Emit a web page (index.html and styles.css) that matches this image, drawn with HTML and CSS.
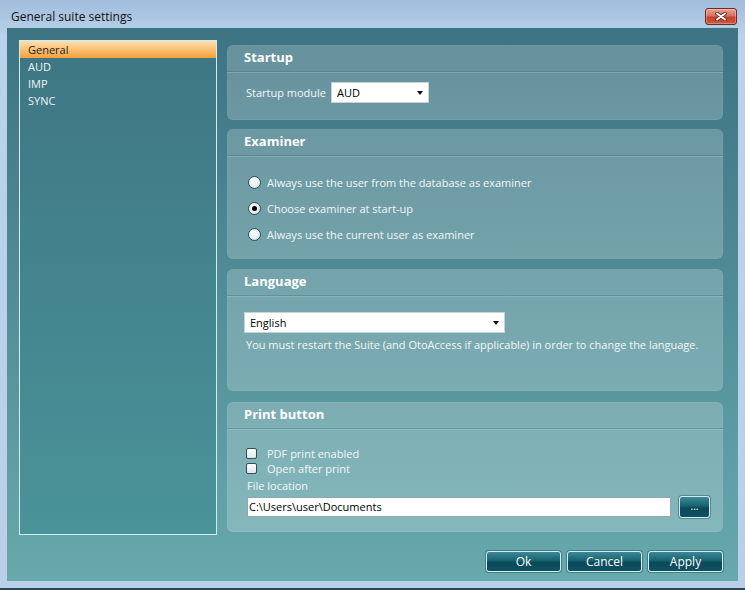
FILE: index.html
```html
<!DOCTYPE html>
<html lang="en">
<head>
<meta charset="utf-8">
<title>General suite settings</title>
<link rel="stylesheet" href="styles.css">
</head>
<body>
<div class="window">
  <div class="titlebar">
    <span class="title">General suite settings</span>
    <div class="close">
      <svg width="12" height="9" viewBox="0 0 12 9"><path d="M2 1.5 L10 7.5 M10 1.5 L2 7.5" stroke="#6a2419" stroke-width="3.6" stroke-linecap="round"/><path d="M2 1.5 L10 7.5 M10 1.5 L2 7.5" stroke="#fff" stroke-width="2" stroke-linecap="round"/></svg>
    </div>
  </div>
  <div class="client">
    <div class="main">
      <ul class="nav">
        <li class="sel">General</li>
        <li>AUD</li>
        <li>IMP</li>
        <li>SYNC</li>
      </ul>
      <div class="groups">
        <section class="group g-startup">
          <div class="ghead">Startup</div>
          <div class="gbody b-startup">
            <span class="label">Startup module</span>
            <div class="select s-small"><span>AUD</span><i class="arrow"></i></div>
          </div>
        </section>
        <section class="group g-examiner">
          <div class="ghead">Examiner</div>
          <div class="gbody b-examiner">
            <div class="opt"><span class="radio"></span><span>Always use the user from the database as examiner</span></div>
            <div class="opt"><span class="radio on"></span><span>Choose examiner at start-up</span></div>
            <div class="opt"><span class="radio"></span><span>Always use the current user as examiner</span></div>
          </div>
        </section>
        <section class="group g-language">
          <div class="ghead">Language</div>
          <div class="gbody b-language">
            <div class="select s-wide"><span>English</span><i class="arrow"></i></div>
            <p class="note">You must restart the Suite (and OtoAccess if applicable) in order to change the language.</p>
          </div>
        </section>
        <section class="group g-print">
          <div class="ghead">Print button</div>
          <div class="gbody b-print">
            <div class="chk-row"><span class="chk"></span><span>PDF print enabled</span></div>
            <div class="chk-row"><span class="chk"></span><span>Open after print</span></div>
            <div class="fl-label">File location</div>
            <div class="path-row">
              <div class="path">C:\Users\user\Documents</div>
              <div class="btn btn-browse">...</div>
            </div>
          </div>
        </section>
      </div>
    </div>
    <div class="buttons">
      <div class="btn">Ok</div>
      <div class="btn">Cancel</div>
      <div class="btn">Apply</div>
    </div>
  </div>
</div>
</body>
</html>
```
FILE: styles.css
```css
* { box-sizing: border-box; }
html, body { margin: 0; padding: 0; }
body {
  width: 745px;
  height: 590px;
  overflow: hidden;
  font-family: "Open Sans", "Noto Sans", sans-serif;
  font-size: 11px;
}
.window {
  width: 745px;
  height: 590px;
  display: flex;
  flex-direction: column;
  background: linear-gradient(#a1bddb, #bad2ea 36px, #b9d0e8);
  padding: 0 7px 7px 7px;
  border-bottom: 2px solid #2b4656;
}
.titlebar {
  height: 28px;
  flex: none;
  padding: 5px 1px 0 4px;
  display: flex;
  align-items: center;
  justify-content: space-between;
}
.title { font-size: 12px; color: #111; }
.close {
  width: 32px;
  height: 17px;
  border: 1px solid #6e2b20;
  border-radius: 3px;
  background: linear-gradient(#eba296, #d9705f 45%, #c5412c 55%, #cc5a41);
  box-shadow: inset 0 0 0 1px rgba(255,255,255,0.28);
  display: flex;
  align-items: center;
  justify-content: center;
}
.client {
  flex: 1;
  background: linear-gradient(#3d7382, #67a9ad);
  padding: 12px 15px 9px 12px;
  display: flex;
  flex-direction: column;
}
.main {
  height: 495px;
  display: flex;
  gap: 10px;
}
.nav {
  width: 198px;
  height: 495px;
  margin: 0;
  padding: 0;
  list-style: none;
  border: 1px solid #d2ecf1;
  background: linear-gradient(#3e7683, #4a9399);
}
.nav li {
  height: 17px;
  line-height: 17px;
  padding-left: 8px;
  color: #eef5f6;
}
.nav li.sel {
  background: linear-gradient(#fde1b4, #fbc47a 45%, #f5a03b);
  color: #222;
}
.groups {
  flex: 1;
  display: flex;
  flex-direction: column;
  padding-top: 5px;
}
.group {
  background: rgba(255,255,255,0.21);
  border-radius: 6px;
  box-shadow: inset 0 0 0 1px rgba(255,255,255,0.06);
}
.g-startup { height: 75px; }
.g-examiner { height: 130px; margin-top: 9px; }
.g-language { height: 122px; margin-top: 10px; }
.g-print { height: 130px; margin-top: 11px; }
.ghead {
  height: 27px;
  padding: 0 0 2px 17px;
  display: flex;
  align-items: center;
  font-weight: bold;
  font-size: 13px;
  color: #fff;
  border-bottom: 1px solid rgba(50,90,100,0.28);
  box-shadow: 0 1px 0 rgba(255,255,255,0.16);
}
.gbody { color: #f1f7f8; }
.b-startup {
  padding: 10px 0 0 19px;
  display: flex;
  align-items: center;
  gap: 5px;
}
.select {
  height: 21px;
  background: #fff;
  border: 1px solid #c6d4d7;
  display: flex;
  align-items: center;
  justify-content: space-between;
  padding: 0 5px 0 5px;
  color: #000;
}
.s-small { width: 98px; }
.s-wide { width: 261px; }
.arrow {
  width: 0;
  height: 0;
  border-left: 3.5px solid transparent;
  border-right: 3.5px solid transparent;
  border-top: 4px solid #111;
}
.b-examiner { padding: 13px 0 0 21px; }
.opt {
  height: 26px;
  display: flex;
  align-items: center;
  gap: 6px;
}
.radio {
  width: 13px;
  height: 13px;
  border-radius: 50%;
  border: 1px solid #33525a;
  background: radial-gradient(circle at 40% 35%, #fff, #e6ecee 60%, #c6d1d4);
  display: flex;
  align-items: center;
  justify-content: center;
}
.radio.on::after {
  content: "";
  width: 5px;
  height: 5px;
  border-radius: 50%;
  background: #000;
}
.b-language { padding: 16px 0 0 17px; }
.note { margin: 5px 0 0 2px; line-height: 14px; }
.b-print { padding: 17px 0 0 19px; }
.chk-row {
  height: 15px;
  display: flex;
  align-items: center;
  gap: 10px;
}
.chk {
  width: 11px;
  height: 11px;
  border: 1px solid #2f4f57;
  border-radius: 2px;
  background: linear-gradient(#fff, #dfe6e8);
}
.fl-label { margin: 3px 0 0 1px; line-height: 14px; }
.path-row {
  margin: 3px 0 0 1px;
  display: flex;
  align-items: center;
  gap: 8px;
}
.path {
  width: 424px;
  height: 20px;
  background: #fff;
  border: 1px solid #8fa9ae;
  color: #000;
  padding-left: 1px;
  line-height: 18px;
}
.buttons {
  margin-top: 16px;
  display: flex;
  justify-content: flex-end;
  gap: 6px;
}
.btn {
  width: 75px;
  height: 21px;
  border: 1px solid #d4ecf0;
  border-radius: 3px;
  background: linear-gradient(#3e8998, #17626f 45%, #0a4959 55%, #0d5262);
  box-shadow: 0 0 0 1px rgba(10,50,60,0.35);
  color: #fff;
  font-size: 12px;
  display: flex;
  align-items: center;
  justify-content: center;
}
.btn-browse {
  width: 31px;
  height: 22px;
  font-size: 10px;
  padding-bottom: 3px;
}
```
